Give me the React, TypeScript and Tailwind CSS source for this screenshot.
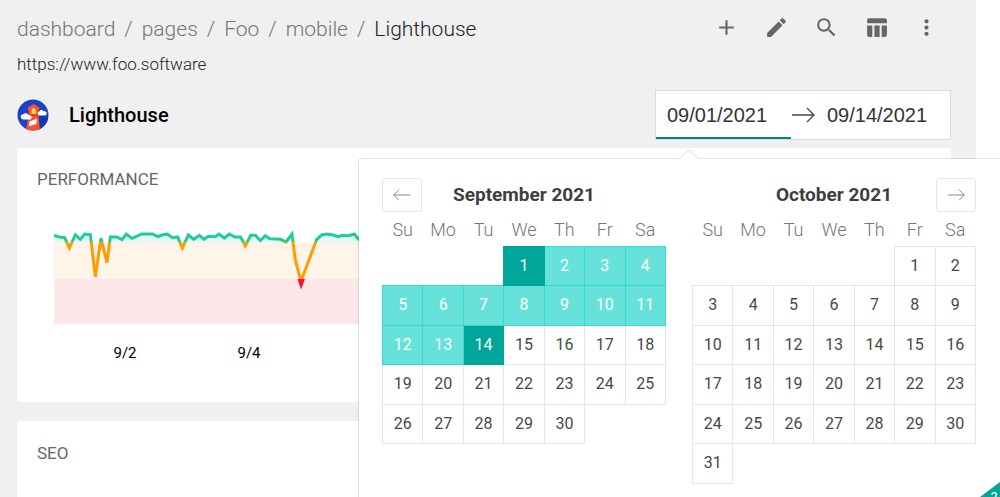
import {MdAdd, MdEdit, MdMoreVert, MdSearch, MdTableChart} from "react-icons/md";

const crumbs = ['dashboard', 'pages', 'Foo', 'mobile'];

const tools = [
  {label: 'Add', Icon: MdAdd},
  {label: 'Edit', Icon: MdEdit},
  {label: 'Search', Icon: MdSearch},
  {label: 'Table view', Icon: MdTableChart},
  {label: 'More', Icon: MdMoreVert},
];

const weekdays = ['Su', 'Mo', 'Tu', 'We', 'Th', 'Fr', 'Sa'];

// score samples, three units to a pixel
const scores = [
  [0, 22], [16, 27], [32, 29], [46, 60], [64, 20], [79, 34], [92, 18], [109, 20], [124, 146], [141, 31],
  [159, 104], [169, 27], [188, 27], [204, 35], [217, 18], [234, 31], [263, 18], [296, 18], [311, 26],
  [324, 21], [340, 18], [355, 29], [371, 27], [385, 60], [403, 21], [419, 34], [436, 22], [450, 34],
  [463, 25], [484, 26], [495, 18], [511, 30], [526, 18], [542, 27], [560, 27], [574, 53], [590, 22],
  [604, 22], [619, 38], [634, 23], [648, 32], [680, 34], [696, 42], [714, 18], [724, 96], [741, 160],
  [788, 34], [803, 21], [818, 18], [838, 21], [852, 26], [866, 22], [883, 23], [901, 18], [913, 33],
  [930, 22], [950, 26], [970, 19], [990, 24],
];

function buildWeeks(offset: number, days: number) {
  const weeks: (number | null)[][] = [];
  for (let start = 1 - offset; start <= days; start += 7) {
    weeks.push(weekdays.map((_, i) => (start + i > 0 && start + i <= days ? start + i : null)));
  }
  return weeks;
}

function dayClass(day: number, start?: number, end?: number) {
  if (start && end) {
    if (day === start || day === end) return 'border border-[#00a699] bg-[#00a699] text-white';
    if (day > start && day < end) return 'border border-[#33dacd] bg-[#66e2da] text-white';
  }
  return 'border border-[#e4e7e7] bg-white text-[#484848]';
}

function Arrow({back, className}: { back?: boolean, className: string }) {
  return (
    <svg viewBox="0 0 24 16" fill="none" stroke="currentColor" strokeWidth="1.3" className={className} aria-hidden="true">
      {back ? <path d="M23 8H1M8 1L1 8l7 7"/> : <path d="M1 8h22M16 1l7 7-7 7"/>}
    </svg>
  );
}

function Month({title, offset, days, start, end, nav}: {
  title: string, offset: number, days: number, start?: number, end?: number, nav: 'prev' | 'next'
}) {
  const button = (
    <button aria-label={nav === 'prev' ? 'Previous month' : 'Next month'}
            className="flex items-center justify-center rounded-[3px] border border-[#e4e7e7] text-[#82888a]">
      <Arrow back={nav === 'prev'} className="h-3 w-5"/>
    </button>
  );

  return (
    <section className="w-[284px] shrink-0">
      <header className="grid h-[34px] grid-cols-[40px_1fr_40px]">
        {nav === 'prev' ? button : <span/>}
        <h2 className="text-center text-[19px] leading-[34px] font-bold text-[#3c3f40]">{title}</h2>
        {nav === 'next' && button}
      </header>
      <table aria-label={title} className="w-full table-fixed border-collapse text-center">
        <thead>
        <tr className="h-[34px]">
          {weekdays.map((name) => (
            <th key={name} className="p-0 pt-0.5 text-lg leading-5 font-light text-[#757575]">{name}</th>
          ))}
        </tr>
        </thead>
        <tbody>
        {buildWeeks(offset, days).map((week, weekIdx) => (
          <tr key={weekIdx} className="h-[39px] even:h-10">
            {week.map((day, dayIdx) => (
              day === null
                ? <td key={dayIdx} className="p-0"/>
                : <td key={dayIdx} className={`p-0 text-base leading-5 ${dayClass(day, start, end)}`}>
                  <button className="w-full">{day}</button>
                </td>
            ))}
          </tr>
        ))}
        </tbody>
      </table>
    </section>
  );
}

function DateRange() {
  return (
    <div className="relative flex h-[50px] w-[296px] items-stretch border border-[#dbdbdb] bg-white font-['Liberation_Sans',sans-serif]">
      <input aria-label="Start date" defaultValue="09/01/2021"
             className="w-[135px] border-b-2 border-[#008489] pt-0.5 pl-[11px] text-xl text-[#333] outline-none"/>
      <Arrow className="h-4 w-6 shrink-0 self-center text-[#484848]"/>
      <input aria-label="End date" defaultValue="09/14/2021"
             className="w-[135px] border-b-2 border-transparent pt-0.5 pl-3 text-xl text-[#333] outline-none"/>

      <div className="absolute top-[68px] left-[-297px] z-10 flex w-[680px] gap-[26px] rounded-[3px] bg-white px-[23px] pt-[19px] pb-10 font-[Roboto,sans-serif] shadow-[0_2px_6px_rgba(0,0,0,0.05),0_0_0_1px_rgba(0,0,0,0.09)]">
        <svg viewBox="0 0 20 11" className="absolute -top-2.5 left-80 h-[11px] w-5" aria-hidden="true">
          <path d="M0 11L10 0l10 11z" fill="#fff"/>
          <path d="M0 10L10 .5 20 10" fill="none" stroke="#dbdbdb"/>
        </svg>
        <Month title="September 2021" offset={3} days={30} start={1} end={14} nav="prev"/>
        <Month title="October 2021" offset={5} days={31} nav="next"/>
      </div>
    </div>
  );
}

function Logo() {
  return (
    <svg viewBox="0 0 32 32" className="size-8" aria-hidden="true">
      <defs>
        <clipPath id="disc"><circle cx="16" cy="16" r="15.5"/></clipPath>
      </defs>
      <g clipPath="url(#disc)">
        <path fill="#1a44c8" d="M0 0h32v32H0z"/>
        <path fill="#1238b0" d="M21 9l11 11v12H21z"/>
        <path fill="#f9532b" d="M16.700 5l5.600 3.500v2.500h-.8v5l1.500 16H8.700l3-16v-5H11V8.500z"/>
        <path fill="#d93d1b" d="M11.700 15.500h9.800V17h-9.800z"/>
        <path fill="#fbd65b" d="M14.500 15v-3.500a2.100 2.100 0 0 1 4.300 0V15z"/>
        <path fill="#fff" d="M12.500 22.500l7.500-2.700-.6 5.200-7.600 2.300z"/>
        <path fill="#fff" d="M6.500 20.500a2.600 2.600 0 0 1-.3-5.200 3.400 3.400 0 0 1 5.600 1 2.200 2.200 0 1 1 .2 4.200z"/>
        <path fill="#fff" d="M22.500 16.500a2 2 0 0 1-.4-3.900 2.600 2.600 0 0 1 4.600-.3 2.200 2.200 0 1 1 .3 4.200z"/>
      </g>
    </svg>
  );
}

function ScoreChart() {
  const line = scores.map(([x, y]) => `${x / 3},${y / 3}`).join(' ');

  return (
    <svg className="block h-24 w-full" role="img" aria-label="Performance score">
      <defs>
        <linearGradient id="score" gradientUnits="userSpaceOnUse" x1="0" y1="0" x2="0" y2="96">
          <stop offset="0.15" stopColor="#1dce9c"/>
          <stop offset="0.15" stopColor="#ff9c00"/>
          <stop offset="0.53" stopColor="#ff9c00"/>
          <stop offset="0.53" stopColor="#ff0a3c"/>
        </linearGradient>
        <clipPath id="good"><rect width="100%" height="14"/></clipPath>
      </defs>
      <polygon points={`0,14 ${line} 330,14`} fill="#e6f8f4" clipPath="url(#good)"/>
      <rect y="14" width="100%" height="37" fill="#fef4e7"/>
      <rect y="51" width="100%" height="45" fill="#fee7eb"/>
      <path d="M243.500 51h7.500l-4 10.500z" fill="#ff0a3c"/>
      <polyline points={line} fill="none" stroke="url(#score)" strokeWidth="3"/>
    </svg>
  );
}

export default function App() {
  return (
    <div className="relative h-screen overflow-hidden bg-white pr-6 font-[Roboto,sans-serif]">
      <main className="min-h-full bg-[#f0f0f0] pr-[25px] pl-[17px]">
        <header className="flex h-[54px] items-center justify-between">
          <nav aria-label="Breadcrumb" className="flex gap-[9px] pt-1 text-[21px] leading-7 font-light text-[#757575]">
            {crumbs.map((name) => (
              <span key={name} className="flex gap-[9px]">
                <a href="#">{name}</a>
                <span>/</span>
              </span>
            ))}
            <span aria-current="page" className="text-[#222]">Lighthouse</span>
          </nav>
          <div className="flex text-[#666]">
            {tools.map(({label, Icon}) => (
              <button key={label} aria-label={label} className="flex size-[50px] items-center justify-center">
                <Icon size={25}/>
              </button>
            ))}
          </div>
        </header>
        <p className="text-[17px] leading-5 font-light text-[#222]">https://www.foo.software</p>

        <div className="mt-4 flex items-center justify-between">
          <div className="flex items-center gap-5">
            <Logo/>
            <h1 className="text-xl font-medium text-black">Lighthouse</h1>
          </div>
          <DateRange/>
        </div>

        <section className="mt-2 rounded bg-white px-5 pt-[19px] pb-[38px]">
          <h2 className="text-[17px] leading-6 text-[#666]">PERFORMANCE</h2>
          <div className="mt-[37px] px-[17px]">
            <ScoreChart/>
            <div className="flex pt-[18px] pl-[9px] text-[15px] leading-[22px] text-black">
              <span className="w-[124px] text-center">9/2</span>
              <span className="w-[124px] text-center">9/4</span>
            </div>
          </div>
        </section>

        <section className="mt-[19px] rounded bg-white px-5 pt-5 pb-40">
          <h2 className="text-[17px] leading-6 text-[#666]">SEO</h2>
        </section>
      </main>

      <button aria-label="Keyboard shortcuts"
              className="absolute right-0 bottom-0 z-20 h-[15px] w-5 overflow-hidden bg-[#00a699] text-white [clip-path:polygon(100%_0,100%_100%,0_100%)]">
        <span className="block pt-2 pl-2 text-sm leading-4">?</span>
      </button>
    </div>
  );
}
